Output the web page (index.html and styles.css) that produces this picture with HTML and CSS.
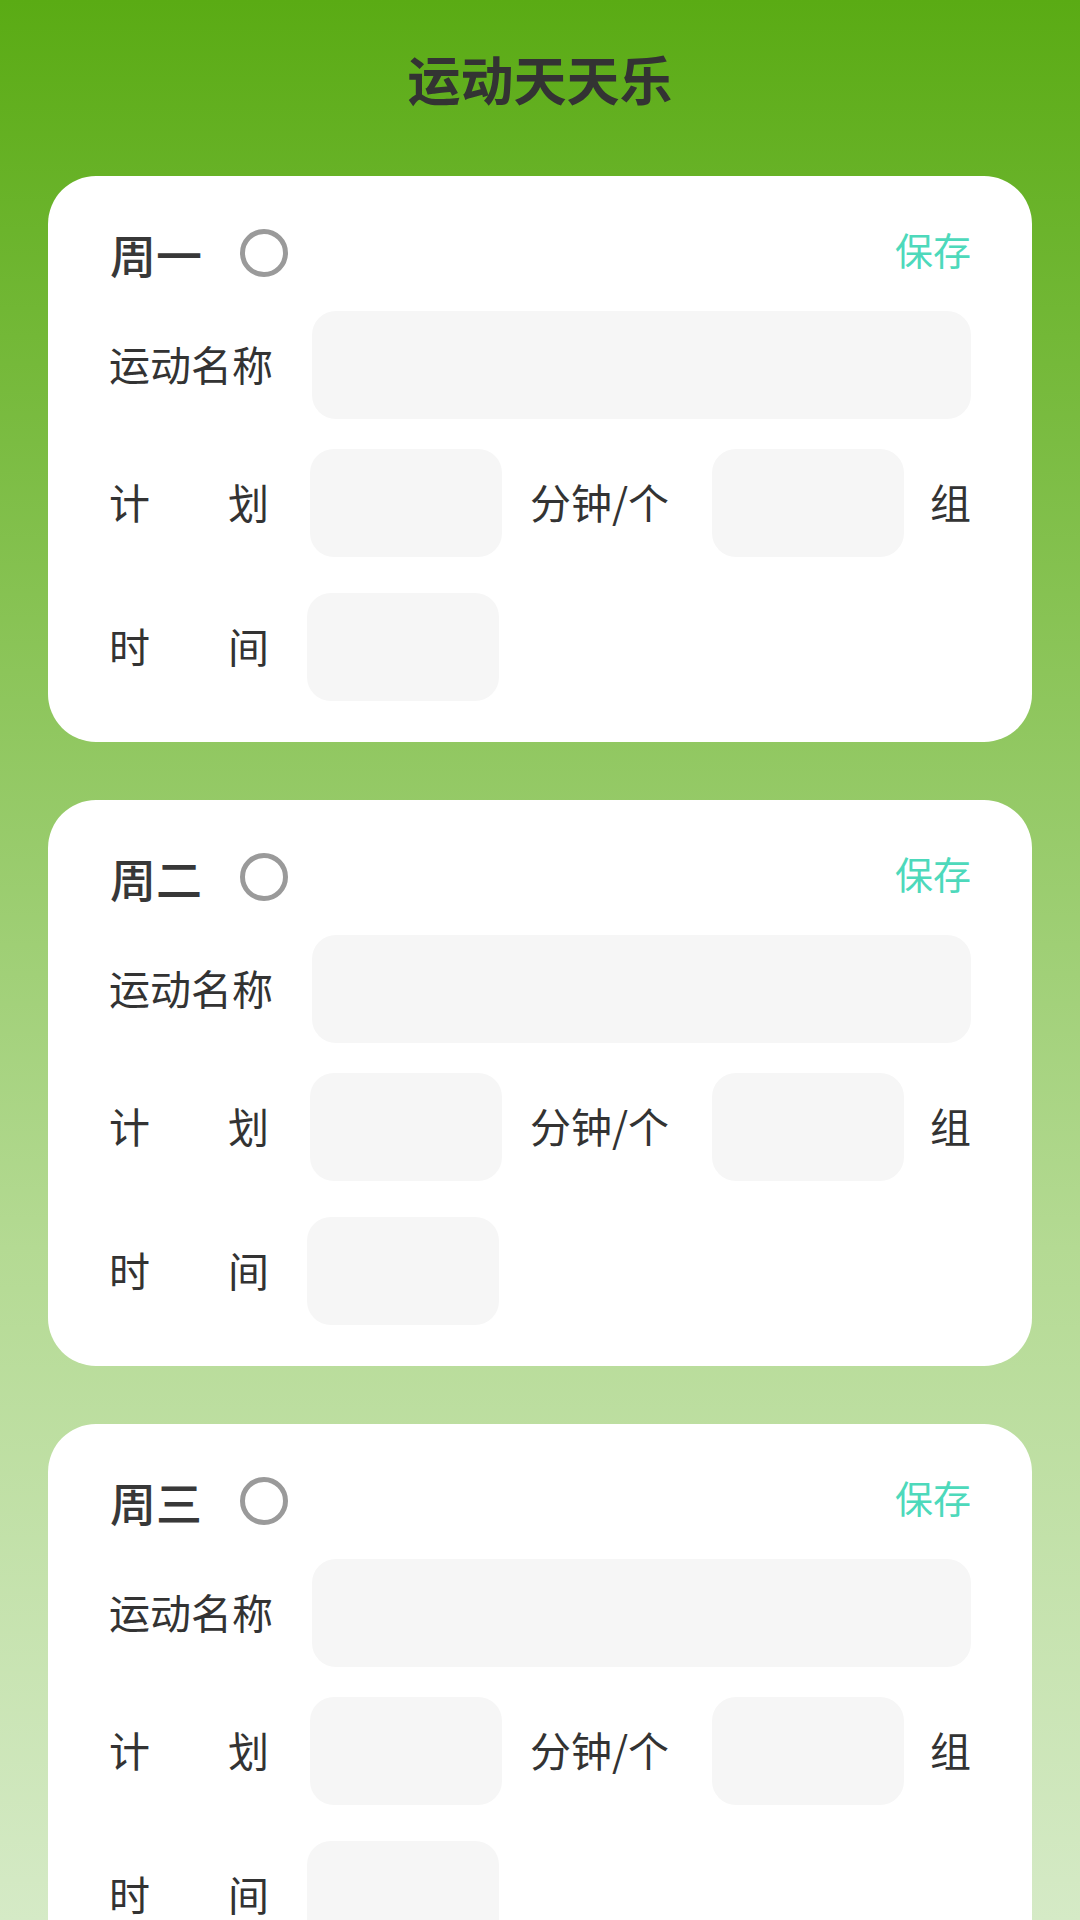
FILE: index.html
```html
<!DOCTYPE html>
<html lang="zh-CN">
<head>
<meta charset="utf-8">
<title>运动天天乐</title>
<link rel="stylesheet" href="styles.css">
</head>
<body>
<div class="page">
  <h1 class="title">运动天天乐</h1>

  <div class="card">
    <div class="card-head">
      <div class="day">周一</div>
      <div class="radio"></div>
      <div class="save">保存</div>
    </div>
    <div class="row row-name">
      <div class="label label-4">运动名称</div>
      <div class="input input-wide"></div>
    </div>
    <div class="row row-plan">
      <div class="label label-2"><span>计</span><span>划</span></div>
      <div class="input input-small"></div>
      <div class="unit unit-min">分钟/个</div>
      <div class="input input-small"></div>
      <div class="unit unit-group">组</div>
    </div>
    <div class="row row-time">
      <div class="label label-2"><span>时</span><span>间</span></div>
      <div class="input input-small input-time"></div>
    </div>
  </div>

  <div class="card">
    <div class="card-head">
      <div class="day">周二</div>
      <div class="radio"></div>
      <div class="save">保存</div>
    </div>
    <div class="row row-name">
      <div class="label label-4">运动名称</div>
      <div class="input input-wide"></div>
    </div>
    <div class="row row-plan">
      <div class="label label-2"><span>计</span><span>划</span></div>
      <div class="input input-small"></div>
      <div class="unit unit-min">分钟/个</div>
      <div class="input input-small"></div>
      <div class="unit unit-group">组</div>
    </div>
    <div class="row row-time">
      <div class="label label-2"><span>时</span><span>间</span></div>
      <div class="input input-small input-time"></div>
    </div>
  </div>

  <div class="card">
    <div class="card-head">
      <div class="day">周三</div>
      <div class="radio"></div>
      <div class="save">保存</div>
    </div>
    <div class="row row-name">
      <div class="label label-4">运动名称</div>
      <div class="input input-wide"></div>
    </div>
    <div class="row row-plan">
      <div class="label label-2"><span>计</span><span>划</span></div>
      <div class="input input-small"></div>
      <div class="unit unit-min">分钟/个</div>
      <div class="input input-small"></div>
      <div class="unit unit-group">组</div>
    </div>
    <div class="row row-time">
      <div class="label label-2"><span>时</span><span>间</span></div>
      <div class="input input-small input-time"></div>
    </div>
  </div>
</div>
</body>
</html>
```

FILE: styles.css
```css
html, body {
  margin: 0;
  padding: 0;
}

body {
  font-family: "Noto Sans CJK SC", "Noto Sans", sans-serif;
  color: #333333;
}

.page {
  width: 1080px;
  height: 1920px;
  overflow: hidden;
  box-sizing: border-box;
  padding: 0 48px;
  display: flex;
  flex-direction: column;
  gap: 58px;
  background: linear-gradient(180deg, #5aab14 0%, #8cc55a 35%, #b4da93 65%, #d5eac6 100%);
}

.title {
  margin: 0 0 -38px 0;
  height: 156px;
  line-height: 156px;
  text-align: center;
  font-size: 53px;
  font-weight: 700;
  color: #333333;
  flex: none;
}

.card {
  flex: none;
  height: 566px;
  box-sizing: border-box;
  background: #ffffff;
  border-radius: 48px;
  padding: 50px 61px 42px 61px;
  display: flex;
  flex-direction: column;
}

.card-head {
  height: 54px;
  display: flex;
  align-items: center;
}

.day {
  font-size: 46px;
  font-weight: 500;
  line-height: 54px;
  padding-left: 1px;
  color: #383838;
}

.radio {
  margin-left: 38px;
  width: 38px;
  height: 38px;
  border: 5px solid #9a9a9a;
  border-radius: 50%;
}

.save {
  margin-left: auto;
  font-size: 38px;
  color: #4dd9bb;
  line-height: 54px;
  margin-top: -8px;
}

.row {
  display: flex;
  align-items: center;
  height: 108px;
}

.row-name {
  margin-top: 31px;
}

.row-plan {
  margin-top: 30px;
}

.row-time {
  margin-top: 36px;
}

.label {
  width: 166px;
  font-size: 41px;
  line-height: 50px;
  flex: none;
  margin-top: -4px;
}

.label-2 {
  display: flex;
  justify-content: space-between;
  padding-right: 6px;
  box-sizing: border-box;
}

.input {
  background: #f6f6f6;
  border-radius: 24px;
  height: 108px;
  flex: none;
}

.input-wide {
  margin-left: 37px;
  flex: 1;
}

.input-small {
  width: 192px;
}

.row-plan .label + .input {
  margin-left: 35px;
}

.input-time {
  margin-left: 32px;
}

.unit {
  font-size: 41px;
  line-height: 50px;
  flex: none;
  margin-top: -4px;
}

.unit-min {
  margin-left: 28px;
  margin-right: 43px;
}

.unit-group {
  margin-left: auto;
}
```
